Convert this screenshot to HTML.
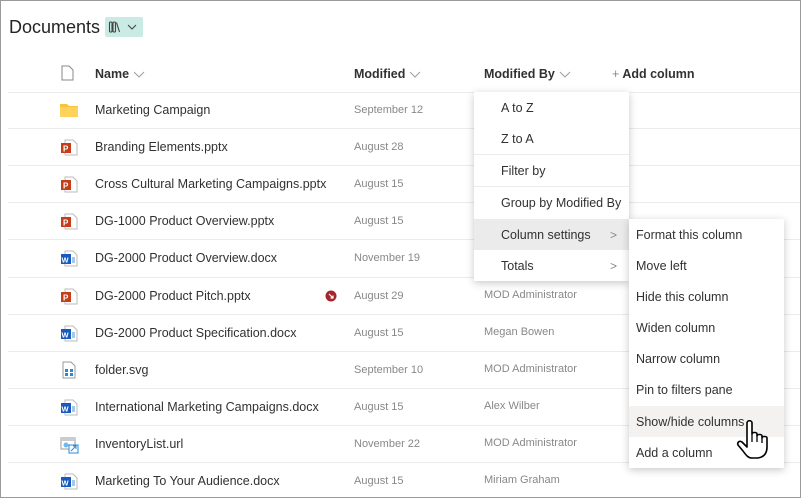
<!DOCTYPE html>
<html><head><style>
body{margin:0;width:801px;height:498px;overflow:hidden;background:#fff;font-family:"Liberation Sans",sans-serif;position:relative}
.frame{position:absolute;left:0;top:0;width:799px;height:496px;border:1px solid #9a9a9a}
.t{position:absolute;white-space:nowrap}
.name{left:95px;font-size:12.5px;color:#323130}
.date{left:354px;font-size:11px;color:#8a8886}
.by{left:484px;font-size:11px;color:#8a8886}
.hd{position:absolute;top:67px;font-size:12.5px;font-weight:bold;color:#323130;white-space:nowrap}
.hd svg{vertical-align:middle;margin-left:4px}
.line{position:absolute;left:8px;right:1px;height:1px;background:#edebe9}
.ic{position:absolute;left:60px}
.menu{position:absolute;background:#fff;box-shadow:0 2px 8px rgba(0,0,0,.22)}
.mi{position:absolute;left:0;right:0;height:31px;font-size:12.5px;color:#323130;line-height:33px}
.hi{background:#ebebeb}
.hi2{background:#f3f2f1}
.sep{position:absolute;left:0;right:0;height:1px;background:#edebe9}
.chev{position:absolute;right:12px;color:#8a8886;font-size:12px}
</style></head><body>
<div class="frame"></div>
<div class="t" style="left:9px;top:17px;font-size:18px;color:#252423">Documents</div>
<div style="position:absolute;left:105px;top:17px;width:38px;height:20px;background:#c9ebe3;border-radius:2px">
<svg width="38" height="20" viewBox="0 0 38 20"><g fill="none" stroke="#444" stroke-width="1.1"><rect x="4.5" y="5" width="2.5" height="10" rx="1"/><rect x="8" y="5" width="2.5" height="10" rx="1"/><path d="M11.5 5.5l3 9.5"/></g><path d="M23 8l4 4 4-4" fill="none" stroke="#444" stroke-width="1.1"/></svg></div>
<svg style="position:absolute;left:61px;top:65px" width="13" height="16"><path d="M1 1h7l4 4v10H1z" fill="none" stroke="#8a8886"/></svg>
<div class="hd" style="left:95px">Name<svg width="12" height="8"><path d="M1 1l5 5 5-5" fill="none" stroke="#a19f9d"/></svg></div>
<div class="hd" style="left:354px">Modified<svg width="12" height="8"><path d="M1 1l5 5 5-5" fill="none" stroke="#a19f9d"/></svg></div>
<div class="hd" style="left:484px">Modified By<svg width="12" height="8"><path d="M1 1l5 5 5-5" fill="none" stroke="#a19f9d"/></svg></div>
<div class="hd" style="left:612px"><span style="color:#8a8886;font-weight:normal">+</span> Add column</div>
<div class="line" style="top:92px"></div>
<div class="line" style="top:128px"></div><div class="line" style="top:165px"></div><div class="line" style="top:202px"></div><div class="line" style="top:239px"></div><div class="line" style="top:277px"></div><div class="line" style="top:314px"></div><div class="line" style="top:351px"></div><div class="line" style="top:388px"></div><div class="line" style="top:425px"></div><div class="line" style="top:462px"></div>

<svg class="ic" style="top:103px" width="18" height="14"><path d="M0 1h7l2 2h9v11H0z" fill="#f8c43b"/><rect y="4" width="18" height="10" fill="#ffd35b"/></svg>
<div class="t name" style="top:103px">Marketing Campaign</div><div class="t date" style="top:104px">September 12</div>
<div class="t name" style="top:140px">Branding Elements.pptx</div><div class="t date" style="top:141px">August 28</div>
<div class="t name" style="top:177px">Cross Cultural Marketing Campaigns.pptx</div><div class="t date" style="top:178px">August 15</div>
<div class="t name" style="top:214px">DG-1000 Product Overview.pptx</div><div class="t date" style="top:215px">August 15</div>
<div class="t name" style="top:251px">DG-2000 Product Overview.docx</div><div class="t date" style="top:252px">November 19</div>
<div class="t name" style="top:289px">DG-2000 Product Pitch.pptx</div><div class="t date" style="top:290px">August 29</div><div class="t by" style="top:289px">MOD Administrator</div>
<svg style="position:absolute;left:325px;top:290px" width="12" height="12"><circle cx="6" cy="6" r="5.5" fill="#a4262c"/><path d="M4 4l4 4M8 5.5V8H5.5" stroke="#fff" stroke-width="1.2" fill="none"/></svg>
<div class="t name" style="top:326px">DG-2000 Product Specification.docx</div><div class="t date" style="top:327px">August 15</div><div class="t by" style="top:326px">Megan Bowen</div>
<div class="t name" style="top:363px">folder.svg</div><div class="t date" style="top:364px">September 10</div><div class="t by" style="top:363px">MOD Administrator</div>
<div class="t name" style="top:400px">International Marketing Campaigns.docx</div><div class="t date" style="top:401px">August 15</div><div class="t by" style="top:400px">Alex Wilber</div>
<div class="t name" style="top:437px">InventoryList.url</div><div class="t date" style="top:438px">November 22</div><div class="t by" style="top:437px">MOD Administrator</div>
<div class="t name" style="top:474px">Marketing To Your Audience.docx</div><div class="t date" style="top:475px">August 15</div><div class="t by" style="top:474px">Miriam Graham</div>

<svg class="ic" style="top:139px" width="18" height="17"><path d="M5 1h8l4 4v11H5z" fill="#fff" stroke="#bbb"/><rect x="1" y="4" width="10" height="10" fill="#c43e1c"/><text x="3" y="12.5" font-size="8" fill="#fff" font-family="Liberation Sans" font-weight="bold">P</text></svg>
<svg class="ic" style="top:176px" width="18" height="17"><path d="M5 1h8l4 4v11H5z" fill="#fff" stroke="#bbb"/><rect x="1" y="4" width="10" height="10" fill="#c43e1c"/><text x="3" y="12.5" font-size="8" fill="#fff" font-family="Liberation Sans" font-weight="bold">P</text></svg>
<svg class="ic" style="top:213px" width="18" height="17"><path d="M5 1h8l4 4v11H5z" fill="#fff" stroke="#bbb"/><rect x="1" y="4" width="10" height="10" fill="#c43e1c"/><text x="3" y="12.5" font-size="8" fill="#fff" font-family="Liberation Sans" font-weight="bold">P</text></svg>
<svg class="ic" style="top:288px" width="18" height="17"><path d="M5 1h8l4 4v11H5z" fill="#fff" stroke="#bbb"/><rect x="1" y="4" width="10" height="10" fill="#c43e1c"/><text x="3" y="12.5" font-size="8" fill="#fff" font-family="Liberation Sans" font-weight="bold">P</text></svg>
<svg class="ic" style="top:250px" width="18" height="17"><path d="M5 1h8l4 4v11H5z" fill="#fff" stroke="#bbb"/><path d="M12 8h3M12 10h3M12 12h3" stroke="#4a8fd8"/><rect x="1" y="4" width="10" height="10" fill="#185abd"/><text x="1.5" y="12.5" font-size="7.5" fill="#fff" font-family="Liberation Sans" font-weight="bold">W</text></svg>
<svg class="ic" style="top:325px" width="18" height="17"><path d="M5 1h8l4 4v11H5z" fill="#fff" stroke="#bbb"/><path d="M12 8h3M12 10h3M12 12h3" stroke="#4a8fd8"/><rect x="1" y="4" width="10" height="10" fill="#185abd"/><text x="1.5" y="12.5" font-size="7.5" fill="#fff" font-family="Liberation Sans" font-weight="bold">W</text></svg>
<svg class="ic" style="top:399px" width="18" height="17"><path d="M5 1h8l4 4v11H5z" fill="#fff" stroke="#bbb"/><path d="M12 8h3M12 10h3M12 12h3" stroke="#4a8fd8"/><rect x="1" y="4" width="10" height="10" fill="#185abd"/><text x="1.5" y="12.5" font-size="7.5" fill="#fff" font-family="Liberation Sans" font-weight="bold">W</text></svg>
<svg class="ic" style="top:473px" width="18" height="17"><path d="M5 1h8l4 4v11H5z" fill="#fff" stroke="#bbb"/><path d="M12 8h3M12 10h3M12 12h3" stroke="#4a8fd8"/><rect x="1" y="4" width="10" height="10" fill="#185abd"/><text x="1.5" y="12.5" font-size="7.5" fill="#fff" font-family="Liberation Sans" font-weight="bold">W</text></svg>
<svg class="ic" style="top:361px" width="18" height="18"><path d="M3 1h8l4 4v12H3z" fill="#fff" stroke="#999"/><rect x="5" y="8" width="3" height="3" fill="#2b88d8"/><rect x="10" y="8" width="3" height="3" fill="#2b88d8"/><rect x="5" y="12" width="3" height="3" fill="#2b88d8"/><rect x="10" y="12" width="3" height="3" fill="#2b88d8"/></svg>
<svg class="ic" style="top:436px" width="20" height="18"><rect x="1" y="2" width="14" height="11" fill="#fff" stroke="#999"/><rect x="1" y="2" width="14" height="3" fill="#ccc"/><circle cx="6" cy="9" r="2.5" fill="#6cb8f0"/><rect x="9" y="9" width="9" height="8" fill="#fff" stroke="#2b88d8"/><path d="M11 15l5-5M13 10h3v3" stroke="#2b88d8" fill="none"/></svg>

<div class="menu" style="left:474px;top:92px;width:155px;height:189px">
<div class="mi" style="top:0"><span style="margin-left:27px">A to Z</span></div>
<div class="mi" style="top:31px"><span style="margin-left:27px">Z to A</span></div>
<div class="sep" style="top:62px"></div>
<div class="mi" style="top:63px"><span style="margin-left:27px">Filter by</span></div>
<div class="sep" style="top:94px"></div>
<div class="mi" style="top:95px"><span style="margin-left:27px">Group by Modified By</span></div>
<div class="mi hi" style="top:127px"><span style="margin-left:27px">Column settings</span><span class="chev">&gt;</span></div>
<div class="mi" style="top:158px"><span style="margin-left:27px">Totals</span><span class="chev">&gt;</span></div>
</div>
<div class="menu" style="left:629px;top:219px;width:155px;height:249px">
<div class="mi" style="top:0"><span style="margin-left:7px">Format this column</span></div>
<div class="mi" style="top:31px"><span style="margin-left:7px">Move left</span></div>
<div class="mi" style="top:62px"><span style="margin-left:7px">Hide this column</span></div>
<div class="mi" style="top:93px"><span style="margin-left:7px">Widen column</span></div>
<div class="mi" style="top:124px"><span style="margin-left:7px">Narrow column</span></div>
<div class="mi" style="top:155px"><span style="margin-left:7px">Pin to filters pane</span></div>
<div class="mi hi2" style="top:187px"><span style="margin-left:7px">Show/hide columns</span></div>
<div class="mi" style="top:218px"><span style="margin-left:7px">Add a column</span></div>
</div>
<svg style="position:absolute;left:736px;top:420px" width="34" height="42" viewBox="0 0 34 42"><path d="M11 3c0-3 5-3 5 0v11c0-2 5-2 5 0v2c0-2 5-2 5 0v2c0-2 5-2 5 0v9c0 6-3 10-9 11h-6c-4 0-6-3-9-7L2 25c-1-2 1-5 4-3l5 5z" fill="#fff" stroke="#000" stroke-width="1.6" stroke-linejoin="round"/><path d="M16 14v8M21 16v6M26 18v5" stroke="#000" stroke-width="1.3"/></svg>
</body></html>
